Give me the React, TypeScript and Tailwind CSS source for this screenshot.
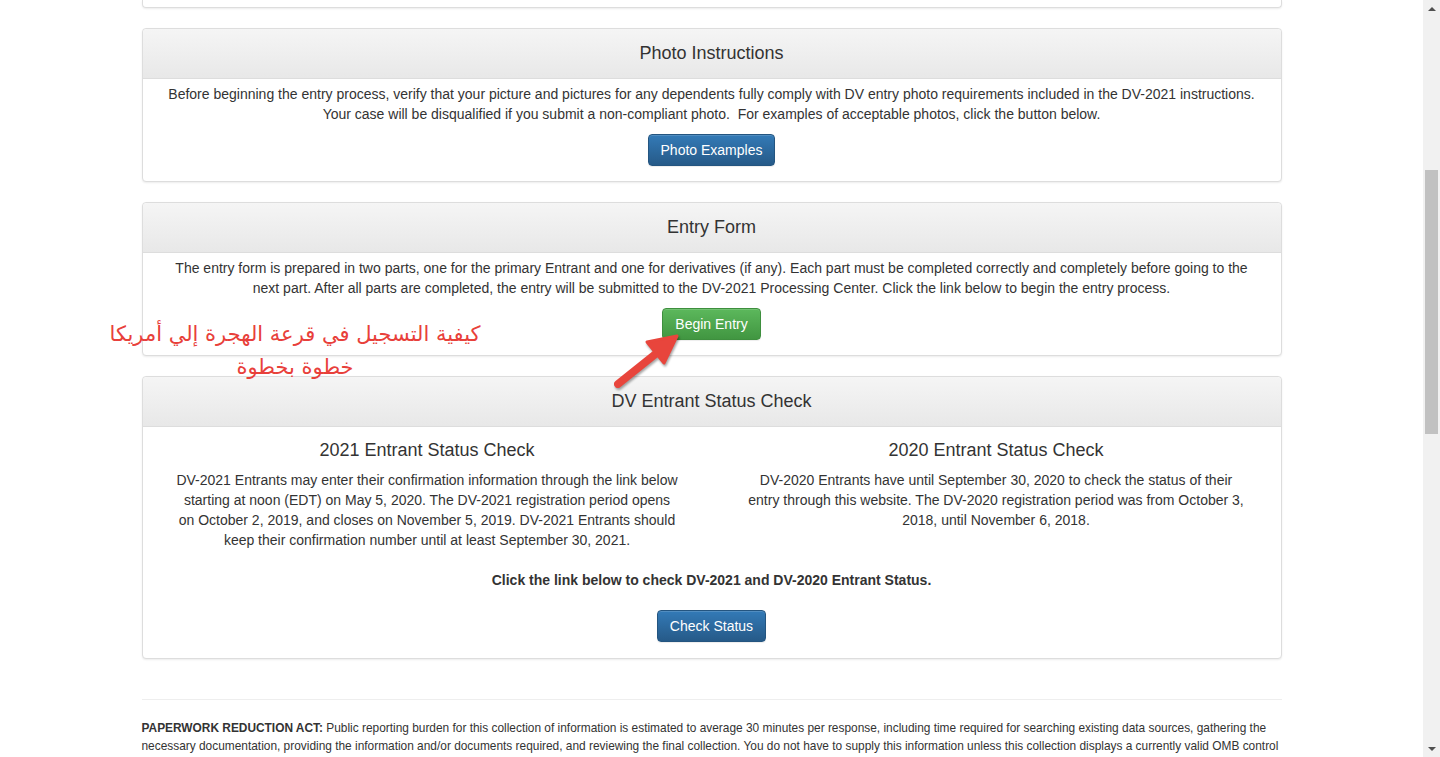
import type { ReactNode } from 'react';

// DV-2021 entry landing page (scrolled view) with annotation overlay.

const FONT = { fontFamily: '"Liberation Sans", Arial, Helvetica, sans-serif' };

function Panel({ title, children }: { title: string; children: ReactNode }) {
  return (
    <div className="mb-5 rounded border border-[#ddd] bg-white shadow-[0_1px_2px_rgba(0,0,0,0.08)]">
      <div className="flex h-[50px] items-center justify-center rounded-t border-b border-[#ddd] bg-gradient-to-b from-[#f5f5f5] to-[#e8e8e8]">
        <h3 className="-mt-[1px] text-[18px] leading-[22px] text-[#333]">{title}</h3>
      </div>
      {children}
    </div>
  );
}

function Btn({ children, variant = 'primary' }: { children: ReactNode; variant?: 'primary' | 'success' }) {
  const cls =
    variant === 'success'
      ? 'border-[#3e8f3e] from-[#5cb85c] to-[#419641]'
      : 'border-[#245580] from-[#337ab7] to-[#265a88]';
  return (
    <button
      type="button"
      className={`inline-flex h-[32px] items-center rounded border bg-gradient-to-b px-3 text-[14px] text-white shadow-[inset_0_1px_0_rgba(255,255,255,0.15),0_1px_1px_rgba(0,0,0,0.075)] ${cls}`}
    >
      {children}
    </button>
  );
}

function Scrollbar() {
  return (
    <div className="flex h-full w-[17px] shrink-0 flex-col items-center bg-[#f1f1f1]">
      <div className="flex h-[17px] items-center justify-center">
        <div className="h-0 w-0 border-x-[4px] border-b-[4px] border-x-transparent border-b-[#505050]" />
      </div>
      <div className="mt-[153px] h-[264px] w-[13px] bg-[#c1c1c1]" />
      <div className="flex-1" />
      <div className="flex h-[17px] items-center justify-center">
        <div className="h-0 w-0 border-x-[4px] border-t-[4px] border-x-transparent border-t-[#505050]" />
      </div>
    </div>
  );
}

export default function App() {
  return (
    <div className="flex h-[757px] w-full overflow-hidden bg-white text-[#333]" style={FONT}>
      <div className="relative h-full flex-1 overflow-hidden">
        <div className="mx-auto w-[1140px]">
          {/* tail of previous panel */}
          <div className="mb-5 h-[8px] rounded-b border-x border-b border-[#ddd] shadow-[0_1px_2px_rgba(0,0,0,0.08)]" />

          <Panel title="Photo Instructions">
            <div className="px-5 pb-[15px] pt-[5px] text-center text-[14px] leading-[20px]">
              <p>
                Before beginning the entry process, verify that your picture and pictures for any dependents fully
                comply with DV entry photo requirements included in the DV-2021 instructions. Your case will be
                disqualified if you submit a non-compliant photo.&nbsp; For examples of acceptable photos, click the
                button below.
              </p>
              <div className="mt-[10px]">
                <Btn>Photo Examples</Btn>
              </div>
            </div>
          </Panel>

          <Panel title="Entry Form">
            <div className="px-5 pb-[15px] pt-[5px] text-center text-[14px] leading-[20px]">
              <p>
                The entry form is prepared in two parts, one for the primary Entrant and one for derivatives (if any).
                Each part must be completed correctly and completely before going to the next part. After all parts
                are completed, the entry will be submitted to the DV-2021 Processing Center. Click the link below to
                begin the entry process.
              </p>
              <div className="mt-[10px]">
                <Btn variant="success">Begin Entry</Btn>
              </div>
            </div>
          </Panel>

          <Panel title="DV Entrant Status Check">
            <div className="pb-[16px] pt-[12px] text-center text-[14px] leading-[20px]">
              <div className="grid grid-cols-2">
                <div className="flex flex-col items-center">
                  <h3 className="text-[18px] leading-[22px]">2021 Entrant Status Check</h3>
                  <p className="mt-[9px] w-[505px]">
                    DV-2021 Entrants may enter their confirmation information through the link below starting at noon
                    (EDT) on May 5, 2020. The DV-2021 registration period opens on October 2, 2019, and closes on
                    November 5, 2019. DV-2021 Entrants should keep their confirmation number until at least September
                    30, 2021.
                  </p>
                </div>
                <div className="flex flex-col items-center">
                  <h3 className="text-[18px] leading-[22px]">2020 Entrant Status Check</h3>
                  <p className="mt-[9px] w-[505px]">
                    DV-2020 Entrants have until September 30, 2020 to check the status of their entry through this
                    website. The DV-2020 registration period was from October 3, 2018, until November 6, 2018.
                  </p>
                </div>
              </div>
              <p className="mt-5 font-bold">Click the link below to check DV-2021 and DV-2020 Entrant Status.</p>
              <div className="mt-5">
                <Btn>Check Status</Btn>
              </div>
            </div>
          </Panel>

          <hr className="mt-10 border-t border-[#eee]" />
          <p className="mt-[19px] text-[11.9px] leading-[18px]">
            <strong>PAPERWORK REDUCTION ACT:</strong> Public reporting burden for this collection of information is
            estimated to average 30 minutes per response, including time required for searching existing data sources,
            gathering the necessary documentation, providing the information and/or documents required, and reviewing
            the final collection. You do not have to supply this information unless this collection displays a
            currently valid OMB control number. If you have comments on the accuracy of this burden estimate and/or
            recommendations for reducing it, please send them to: A/GIS/DIR, Room 2400 SA-22, U.S. Department of
            State, Washington, DC 20520.
          </p>
        </div>

        {/* annotation overlay */}
        <div
          dir="rtl"
          className="absolute left-[95px] top-[318px] w-[400px] whitespace-nowrap text-center text-[21px] leading-[33px] text-[#e8403a]"
          style={{ fontFamily: '"DejaVu Sans", Arial, sans-serif' }}
        >
          <div>كيفية التسجيل في قرعة الهجرة إلي أمريكا</div>
          <div>خطوة بخطوة</div>
        </div>
        <svg className="absolute left-0 top-0" width="1423" height="757" style={{ pointerEvents: 'none' }}>
          <g style={{ filter: 'drop-shadow(1px 2px 1px rgba(0,0,0,0.35))' }}>
            <line x1="618" y1="384" x2="658" y2="352" stroke="#e8453c" strokeWidth="8" strokeLinecap="round" />
            <polygon points="677,336 664,363 647,342" fill="#e8453c" stroke="#e8453c" strokeWidth="3" strokeLinejoin="round" />
          </g>
        </svg>
      </div>
      <Scrollbar />
    </div>
  );
}
